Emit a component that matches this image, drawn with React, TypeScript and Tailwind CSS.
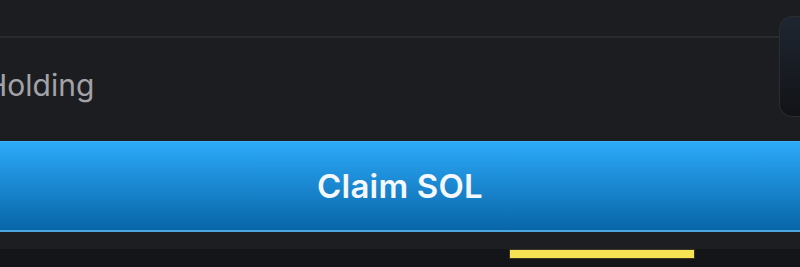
export default function App() {
  return (
    <div
      className="w-[800px] h-[267px] overflow-hidden flex flex-col bg-[#1c1d21]"
      style={{ fontFamily: "Inter, 'Noto Sans', sans-serif" }}
    >
      <div className="h-[141px] flex shrink-0">
        <div className="flex-1 flex flex-col">
          <div className="h-[36px]" />
          <div className="h-[2px] bg-[#2a2b30]" />
          <div className="pt-[32px] -ml-[15px]">
            <span className="text-[30px] leading-none text-[#a2a2a7]">Holding</span>
          </div>
        </div>
        <div className="w-[40px] -mr-[19px] mt-[16px] h-[101px] rounded-[13px] border border-[#2b2d33] bg-gradient-to-b from-[#1e2631] to-[#121317] shrink-0" />
      </div>

      <button className="h-[91px] shrink-0 w-full border-t border-[#3fb3fb] border-b-2 border-b-[#4da6e0] bg-gradient-to-b from-[#2caafa] to-[#0766a8] flex items-center justify-center">
        <span className="text-[33px] font-semibold leading-none text-[#f4f8fc] tracking-[0.2px]">Claim SOL</span>
      </button>

      <div className="h-[17px] shrink-0 bg-[#1d1e22]" />
      <div className="flex-1 bg-[#141519] pl-[510px]">
        <div className="mt-[1px] w-[184px] h-[8px] bg-[#f6e353] ring-1 ring-[#3a3520]" />
      </div>
    </div>
  );
}
